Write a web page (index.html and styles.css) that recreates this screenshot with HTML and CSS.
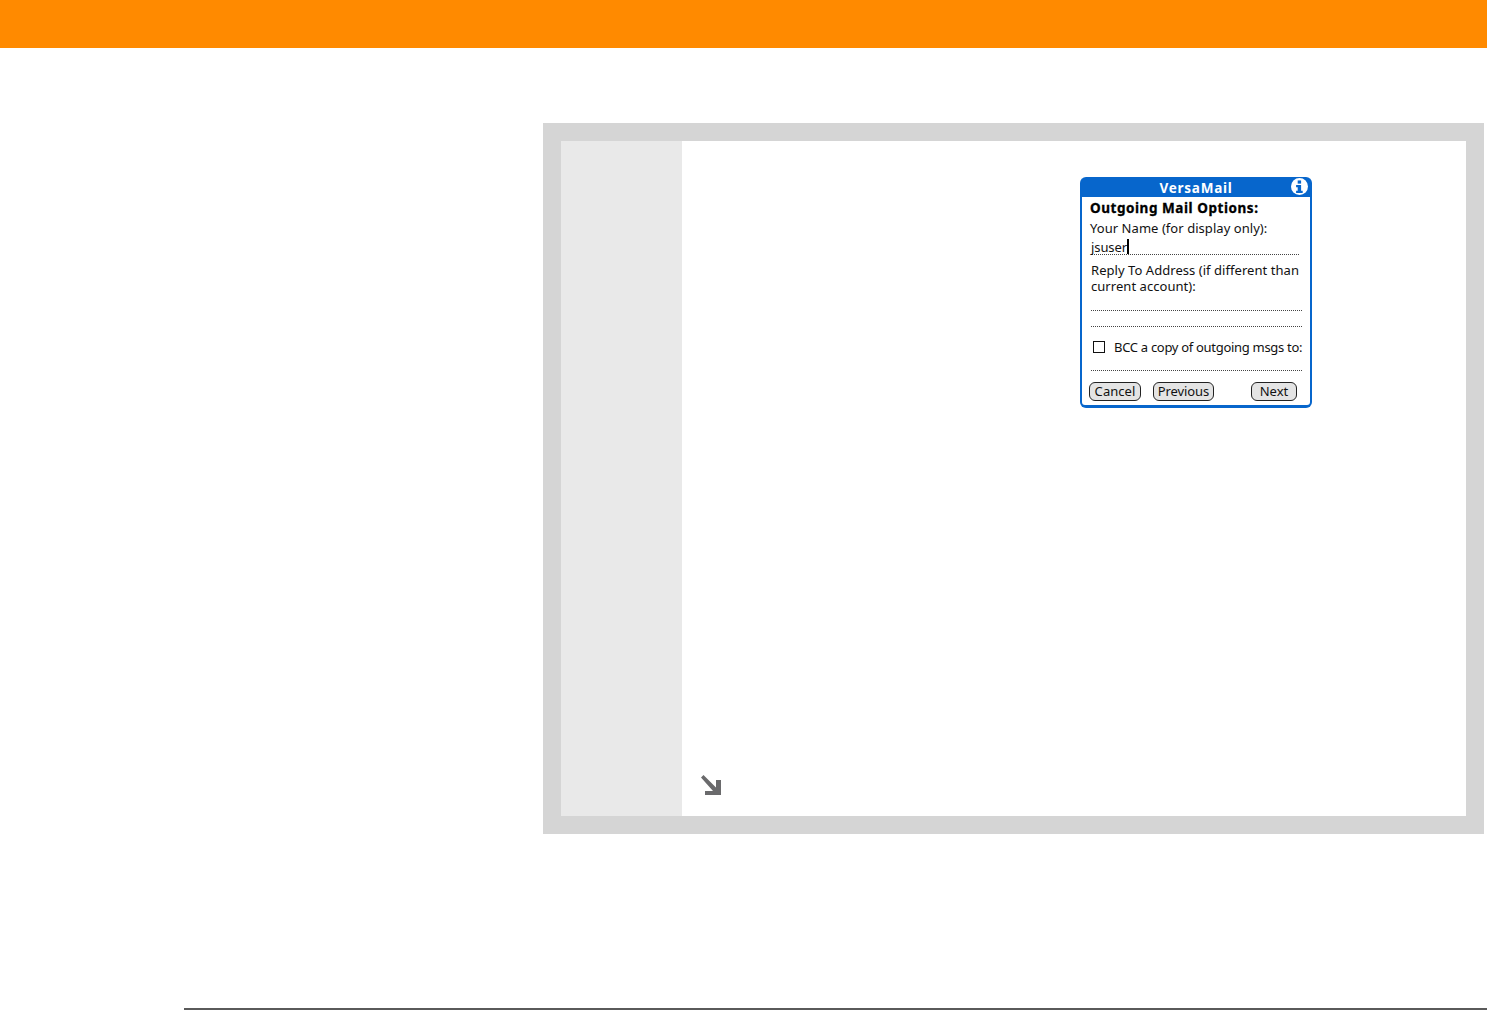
FILE: index.html
```html
<!DOCTYPE html>
<html lang="en">
<head>
<meta charset="utf-8">
<title>VersaMail</title>
<link rel="stylesheet" href="styles.css">
</head>
<body>
<header class="topbar"></header>
<main class="main">
  <section class="panel">
    <div class="step-col"></div>
    <div class="content">
      <div class="dialog">
        <div class="titlebar">
          <span class="title">VersaMail</span>
          <svg class="info" width="17" height="17" viewBox="0 0 16 16"><circle cx="8" cy="8" r="8" fill="#fff"/><rect x="6.3" y="2.3" width="3.2" height="3" fill="#0766cc"/><path d="M4.8 6.6h4.7v5.4H11v2H4.8v-2h1.5V8.6H4.8z" fill="#0766cc"/></svg>
        </div>
        <div class="body">
          <div class="heading">Outgoing Mail Options:</div>
          <div class="label l-name">Your Name (for display only):</div>
          <div class="field f-name"><span class="value">jsuser</span><span class="caret"></span></div>
          <div class="label l-reply">Reply To Address (if different than<br>current account):</div>
          <div class="field f-r1"></div>
          <div class="field f-r2"></div>
          <div class="bcc"><span class="check"></span><span class="label bcc-text">BCC a copy of outgoing msgs to:</span></div>
          <div class="field f-bcc"></div>
          <div class="buttons">
            <span class="btn b-cancel">Cancel</span>
            <span class="btn b-prev">Previous</span>
            <span class="btn b-next">Next</span>
          </div>
        </div>
      </div>
      <svg class="arrow" width="22" height="22" viewBox="0 0 22 22"><path d="M1 3.5 3.5 1 16 13.5V6h5v15H5v-4h8z" fill="#6a6a6c"/></svg>
    </div>
  </section>
</main>
<footer class="footer"><div class="rule"></div></footer>
</body>
</html>
```
FILE: styles.css
```css
html, body { margin: 0; padding: 0; background: #fff; }
body { width: 1487px; height: 1010px; overflow: hidden; display: flex; flex-direction: column; font-family: "Noto Sans", sans-serif; }
.topbar { height: 48px; background: #ff8a00; flex: none; }
.main { flex: none; height: 786px; padding: 75px 3px 0 543px; box-sizing: border-box; }
.panel { width: 941px; height: 711px; box-sizing: border-box; border: 18px solid #d5d5d5; display: flex; background: #fff; }
.step-col { width: 121px; background: #e9e9e9; flex: none; }
.content { flex: 1; display: flex; flex-direction: column; align-items: flex-start; padding: 36px 0 18px 398px; position: relative; }
.dialog { width: 232px; height: 231px; box-sizing: border-box; background: #0766cc; border-radius: 6px; padding: 0 2px 3px; display: flex; flex-direction: column; }
.titlebar { height: 20px; flex: none; display: flex; align-items: center; justify-content: center; position: relative; }
.title { color: #fff; font-weight: 700; font-size: 13.5px; letter-spacing: .75px; line-height: 19px; margin-top: 2px; }
.info { position: absolute; right: 2px; top: 1px; }
.body { flex: 1; background: #fff; padding: 0 8px; color: #111; font-size: 13px; line-height: 16px; letter-spacing: .05px; border-radius: 0 0 3px 3px; }
.heading { font-weight: 700; color: #000; height: 16px; font-size: 13.5px; letter-spacing: .55px; margin-top: 3px; -webkit-text-stroke: .3px #000; }
.label { white-space: nowrap; }
.l-name { margin-top: 4px; }
.field { border-bottom: 1px dotted #444; margin-left: 1px; height: 15px; }
.f-name { display: flex; align-items: flex-end; width: 208px; height: 18px; }
.value { line-height: 16px; letter-spacing: -.1px; margin-bottom: -1px; }
.caret { width: 2px; height: 15px; background: #000; }
.l-reply { margin: 7px 0 0 1px; }
.f-r1 { width: 211px; height: 16px; }
.f-r2 { width: 211px; }
.bcc { display: flex; align-items: center; margin: 12px 0 0 3px; height: 16px; }
.bcc-text { letter-spacing: -.3px; }
.check { width: 10px; height: 10px; border: 1px solid #111; margin-right: 9px; flex: none; }
.f-bcc { width: 211px; height: 15px; }
.buttons { display: flex; margin: 11px 0 0 -1px; }
.btn { height: 19px; box-sizing: border-box; border: 1px solid #222; border-radius: 6px; background: #e4e4e4; text-align: center; line-height: 17px; }
.b-cancel { width: 52px; }
.b-prev { width: 61px; margin-left: 12px; letter-spacing: -.1px; }
.b-next { width: 46px; margin-left: 37px; }
.arrow { position: absolute; left: 18px; top: 633px; }
.footer { flex: 1; display: flex; flex-direction: column; justify-content: flex-end; padding-left: 184px; }
.rule { height: 2px; background: #5a5a5a; }
```
